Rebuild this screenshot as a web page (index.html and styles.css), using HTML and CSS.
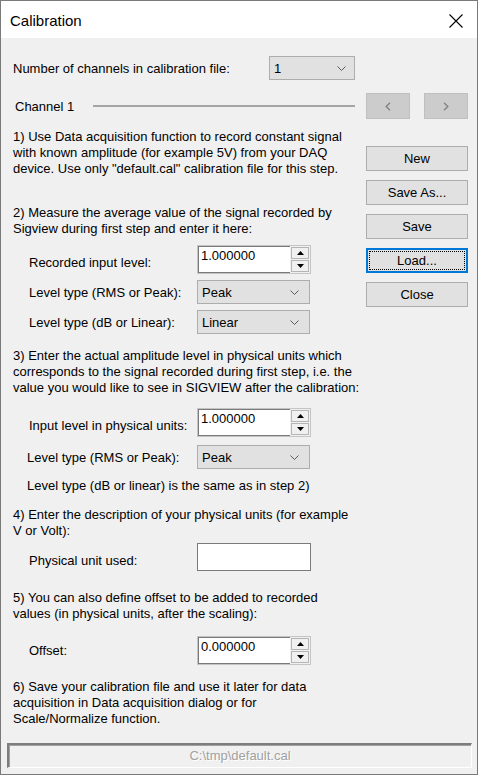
FILE: index.html
```html
<!DOCTYPE html>
<html>
<head>
<meta charset="utf-8">
<link rel="stylesheet" href="styles.css">
</head>
<body>
<div class="window">
  <div class="titlebar">
    <span class="title">Calibration</span>
    <svg class="close" width="16" height="16" viewBox="0 0 16 16"><path d="M1.5 1.5 L14.5 14.5 M14.5 1.5 L1.5 14.5" stroke="#000" stroke-width="1.1" fill="none"/></svg>
  </div>
  <div class="client">
    <div class="row-channels">
      <span class="lbl-top">Number of channels in calibration file:</span>
      <div class="combo combo-small"><span>1</span><svg class="chev" width="9" height="5" viewBox="0 0 9 5"><path d="M0.5 0.5 L4.5 4.5 L8.5 0.5" stroke="#5a5a5a" stroke-width="1" fill="none"/></svg></div>
    </div>
    <div class="row-channel">
      <span class="ch-label">Channel 1</span>
      <div class="ch-line"></div>
      <div class="nav-btns">
        <div class="navbtn"><svg width="6" height="9" viewBox="0 0 6 9"><path d="M5 0.8 L1.2 4.5 L5 8.2" stroke="#838383" stroke-width="1.4" fill="none"/></svg></div>
        <div class="navbtn"><svg width="6" height="9" viewBox="0 0 6 9"><path d="M1 0.8 L4.8 4.5 L1 8.2" stroke="#838383" stroke-width="1.4" fill="none"/></svg></div>
      </div>
    </div>
    <div class="main">
      <div class="steps">
        <p class="p1">1) Use Data acquisition function to record constant signal<br>with known amplitude (for example 5V) from your DAQ<br>device. Use only "default.cal" calibration file for this step.</p>
        <p class="p2">2) Measure the average value of the signal recorded by<br>Sigview during first step and enter it here:</p>
        <div class="field f-rec">
          <span class="flabel lab-low">Recorded input level:</span>
          <div class="spin"><div class="edit">1.000000</div><div class="spinbtns"><div class="sb"><svg width="7" height="4" viewBox="0 0 7 4"><path d="M0 4 L3.5 0 L7 4Z" fill="#000"/></svg></div><div class="sb"><svg width="7" height="4" viewBox="0 0 7 4"><path d="M0 0 L3.5 4 L7 0Z" fill="#000"/></svg></div></div></div>
        </div>
        <div class="field f-c1">
          <span class="flabel">Level type (RMS or Peak):</span>
          <div class="combo"><span>Peak</span><svg class="chev" width="9" height="5" viewBox="0 0 9 5"><path d="M0.5 0.5 L4.5 4.5 L8.5 0.5" stroke="#5a5a5a" stroke-width="1" fill="none"/></svg></div>
        </div>
        <div class="field f-c2">
          <span class="flabel">Level type (dB or Linear):</span>
          <div class="combo"><span>Linear</span><svg class="chev" width="9" height="5" viewBox="0 0 9 5"><path d="M0.5 0.5 L4.5 4.5 L8.5 0.5" stroke="#5a5a5a" stroke-width="1" fill="none"/></svg></div>
        </div>
        <p class="p3">3) Enter the actual amplitude level in physical units which<br>corresponds to the signal recorded during first step, i.e. the<br>value you would like to see in SIGVIEW after the calibration:</p>
        <div class="field f-in">
          <span class="flabel lab-low">Input level in physical units:</span>
          <div class="spin"><div class="edit">1.000000</div><div class="spinbtns"><div class="sb"><svg width="7" height="4" viewBox="0 0 7 4"><path d="M0 4 L3.5 0 L7 4Z" fill="#000"/></svg></div><div class="sb"><svg width="7" height="4" viewBox="0 0 7 4"><path d="M0 0 L3.5 4 L7 0Z" fill="#000"/></svg></div></div></div>
        </div>
        <div class="field f-c3 narrow">
          <span class="flabel">Level type (RMS or Peak):</span>
          <div class="combo"><span>Peak</span><svg class="chev" width="9" height="5" viewBox="0 0 9 5"><path d="M0.5 0.5 L4.5 4.5 L8.5 0.5" stroke="#5a5a5a" stroke-width="1" fill="none"/></svg></div>
        </div>
        <p class="note">Level type (dB or linear) is the same as in step 2)</p>
        <p class="p4">4) Enter the description of your physical units (for example<br>V or Volt):</p>
        <div class="field f-unit">
          <span class="flabel lab-low">Physical unit used:</span>
          <div class="textbox"></div>
        </div>
        <p class="p5">5) You can also define offset to be added to recorded<br>values (in physical units, after the scaling):</p>
        <div class="field f-off">
          <span class="flabel">Offset:</span>
          <div class="spin"><div class="edit">0.000000</div><div class="spinbtns"><div class="sb"><svg width="7" height="4" viewBox="0 0 7 4"><path d="M0 4 L3.5 0 L7 4Z" fill="#000"/></svg></div><div class="sb"><svg width="7" height="4" viewBox="0 0 7 4"><path d="M0 0 L3.5 4 L7 0Z" fill="#000"/></svg></div></div></div>
        </div>
        <p class="p6">6) Save your calibration file and use it later for data<br>acquisition in Data acquisition dialog or for<br>Scale/Normalize function.</p>
      </div>
      <div class="buttons">
        <div class="btn">New</div>
        <div class="btn">Save As...</div>
        <div class="btn">Save</div>
        <div class="btn focus">Load...</div>
        <div class="btn">Close</div>
      </div>
    </div>
    <div class="pathbar">C:\tmp\default.cal</div>
  </div>
</div>
</body>
</html>
```

FILE: styles.css
```css
html, body {
  margin: 0;
  padding: 0;
  background: #f0f0f0;
}
* { box-sizing: border-box; }
.window {
  width: 478px;
  height: 775px;
  border: 1px solid #7a7a7a;
  background: #f0f0f0;
  font-family: "Liberation Sans", Arial, sans-serif;
  font-size: 13px;
  color: #000;
  display: flex;
  flex-direction: column;
}
.titlebar {
  height: 37px;
  background: #fff;
  display: flex;
  align-items: center;
  justify-content: space-between;
  padding: 0 13px 0 9px;
  flex: none;
}
.title {
  font-size: 15px;
  padding-top: 2px;
}
.close { margin-top: 2px; }
.client {
  flex: 1;
  padding: 18px 9px 0 12px;
  display: flex;
  flex-direction: column;
}
.row-channels {
  display: flex;
  align-items: center;
  height: 24px;
}
.lbl-top { width: 256px; padding-top: 1px; }
.combo {
  width: 113px;
  height: 24px;
  background: #e1e1e1;
  border: 1px solid #adadad;
  display: flex;
  align-items: center;
  justify-content: space-between;
  padding: 0 10px 0 4px;
}
.combo-small { width: 86px; padding-right: 8px; }
.chev { margin-top: 1px; }
.row-channel {
  display: flex;
  align-items: center;
  margin-top: 13px;
  height: 26px;
}
.ch-label { width: 80px; padding-left: 2px; }
.ch-line {
  width: 262px;
  height: 2px;
  background: #a5a5a5;
  margin-top: -1px;
}
.nav-btns {
  display: flex;
  gap: 14px;
  margin-left: 11px;
}
.navbtn {
  width: 44px;
  height: 26px;
  background: #cccccc;
  border: 1px solid #bfbfbf;
  display: flex;
  align-items: center;
  justify-content: center;
}
.main {
  display: flex;
  justify-content: space-between;
}
.steps {
  width: 350px;
  padding-top: 10px;
}
.steps p {
  margin: 0;
  line-height: 16px;
}
.p2 { margin-top: 28px !important; }
.p3 { margin-top: 14px !important; }
.note { margin-top: 9px !important; padding-left: 14px; }
.p4 { margin-top: 13px !important; }
.p5 { margin-top: 19px !important; }
.p6 { margin-top: 14px !important; }
.field {
  display: flex;
  align-items: center;
  padding-left: 16px;
}
.field.narrow { padding-left: 14px; }
.flabel { width: 168px; }
.narrow .flabel { width: 170px; }
.lab-low { padding-top: 6px; }
.f-rec { margin-top: 8px; }
.f-c1 { margin-top: 6px; }
.f-c2 { margin-top: 6px; }
.f-in { margin-top: 12px; }
.f-c3 { margin-top: 8px; }
.f-unit { margin-top: 4px; }
.f-off { margin-top: 14px; }
.spin {
  width: 114px;
  height: 29px;
  display: flex;
  border: 1px solid #c4c4c4;
}
.edit {
  flex: 1;
  background: #fff;
  border-top: 1px solid #7a7a7a;
  border-left: 1px solid #7a7a7a;
  border-bottom: 1px solid #7a7a7a;
  padding: 1px 0 0 2px;
  line-height: 16px;
}
.spinbtns {
  width: 20px;
  display: flex;
  flex-direction: column;
  background: #f0f0f0;
  padding: 1px;
  gap: 1px;
}
.sb {
  flex: 1;
  border: 1px solid #b5b5b5;
  background: #f0f0f0;
  display: flex;
  align-items: center;
  justify-content: center;
}
.textbox {
  width: 114px;
  height: 28px;
  background: #fff;
  border: 1px solid #7a7a7a;
}
.buttons {
  display: flex;
  flex-direction: column;
  gap: 9px;
  padding-top: 27px;
}
.btn {
  width: 102px;
  height: 25px;
  background: #e1e1e1;
  border: 1px solid #adadad;
  display: flex;
  align-items: center;
  justify-content: center;
}
.btn.focus {
  border: 2px solid #0078d7;
  outline: 1px dotted #000;
  outline-offset: -4px;
}
.pathbar {
  margin: 16px -4px 0 -6px;
  height: 25px;
  border-top: 2px solid #7d7d7d;
  border-left: 2px solid #7d7d7d;
  border-bottom: 1px solid #fff;
  border-right: 1px solid #fff;
  box-shadow: inset 1px 1px 0 #a0a0a0;
  color: #a0a0a0;
  text-shadow: 1px 1px 0 #fff;
  display: flex;
  align-items: center;
  justify-content: center;
  padding-bottom: 1px;
}
```
